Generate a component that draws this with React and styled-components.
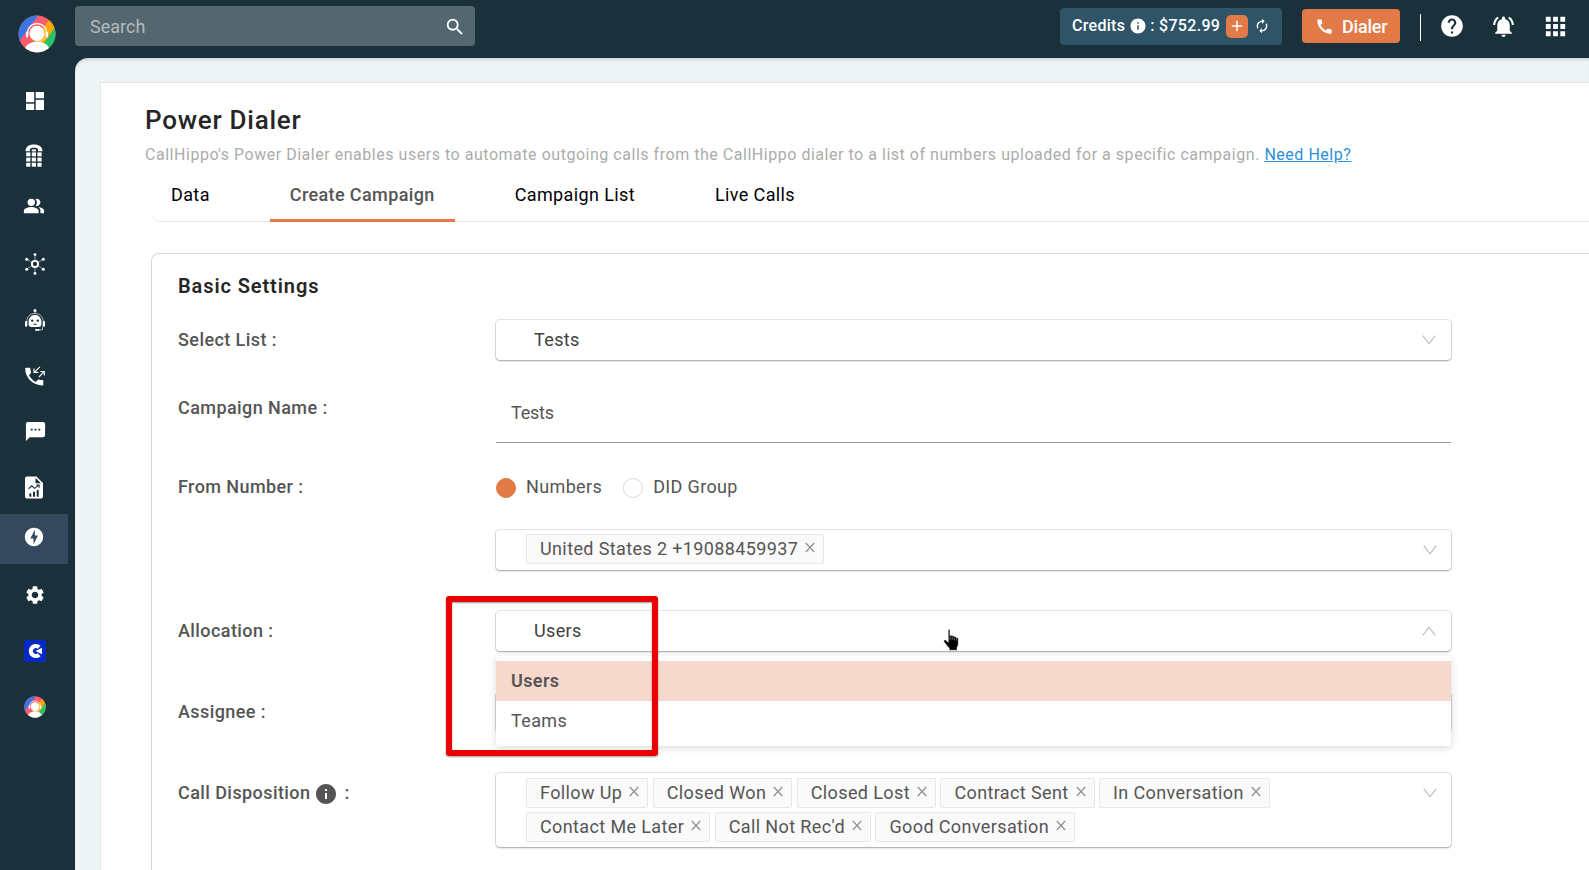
import React from 'react'
import styled, { createGlobalStyle } from 'styled-components'
import {
    MdSearch,
    MdInfo,
    MdAdd,
    MdAutorenew,
    MdCall,
    MdHelp,
    MdNotificationsActive,
    MdApps,
    MdPeopleAlt,
    MdSms,
    MdOfflineBolt,
    MdSettings,
} from 'react-icons/md'

const GlobalStyle = createGlobalStyle`
    * {
        box-sizing: border-box;
    }
    body {
        margin: 0;
        overflow: hidden;
        font-family: Roboto, "Liberation Sans", sans-serif;
        font-size: 18px;
        color: #555555;
    }
    svg {
        display: block;
        flex-shrink: 0;
    }
`

/* ---------- icons ---------- */

const DashboardIcon = () => (
    <svg width="18" height="18" viewBox="0 0 18 18" fill="#fff">
        <rect width="8.2" height="10.2" />
        <rect y="11.7" width="8.2" height="6.3" />
        <rect x="9.7" width="8.3" height="6.3" />
        <rect x="9.7" y="7.8" width="8.3" height="10.2" />
    </svg>
)

const DialPadIcon = () => (
    <svg width="18" height="23" viewBox="0 0 18 23" fill="#fff">
        <path d="M.5 7.2C.4 3 3.800.5 9 .5s8.600 2.500 8.500 6.700h-4.500V5.500C13 4.400 11.500 3.800 9 3.800s-4 .6-4 1.700v1.700z" />
        {[8.4, 13.6, 18.8].map((y) =>
            [1.2, 6.8, 12.4].map((x) => <rect key={x + '-' + y} x={x} y={y} width="4.200" height="3.900" />)
        )}
        <rect x="6.800" y="5.400" width="4.200" height="2" />
    </svg>
)

const HubIcon = () => (
    <svg width="20" height="22" viewBox="0 0 20 22" fill="#fff" stroke="#fff">
        <path
            d="M10 7V1.500M10 15v5.500M6.500 9 1.800 6.300M13.500 9l4.700-2.700M6.500 13l-4.700 3M13.500 13l4.700 3"
            strokeWidth=".7"
            opacity=".75"
        />
        <circle cx="10" cy="11" r="3.100" fill="none" strokeWidth="1.900" />
        <g stroke="none">
            <circle cx="10" cy="1.600" r="1.400" />
            <circle cx="10" cy="20.400" r="1.400" />
            <circle cx="1.700" cy="6.200" r="1.500" />
            <circle cx="18.300" cy="6.200" r="1.500" />
            <circle cx="1.700" cy="16.200" r="1.500" />
            <circle cx="18.300" cy="16.200" r="1.500" />
        </g>
    </svg>
)

const BotIcon = () => (
    <svg width="20" height="22" viewBox="0 0 20 22" fill="none">
        <circle cx="10" cy="1.500" r="1.500" fill="#fff" />
        <path d="M10 2v3M1.700 13C1.700 7.600 5.200 4.500 10 4.500s8.300 3.100 8.300 8.500M17.500 17.500v3.300h-5" stroke="#fff" strokeWidth=".8" opacity=".8" />
        <path d="M3.600 13c0-4.300 2.600-7 6.400-7s6.400 2.700 6.400 7v2.300c0 1.600-1 2.600-2.600 2.600H6.200c-1.600 0-2.600-1-2.600-2.600z" fill="#fff" />
        <rect x="0" y="12" width="2.300" height="5.800" rx="1.100" fill="#fff" />
        <rect x="17.700" y="12" width="2.300" height="5.800" rx="1.100" fill="#fff" />
        <rect x="10" y="20" width="4.600" height="1.700" rx=".8" fill="#fff" />
        <circle cx="7.200" cy="11.600" r="1.200" fill="#1a313c" />
        <circle cx="12.800" cy="11.600" r="1.200" fill="#1a313c" />
        <path d="M8 14.800h4c-.4 1.500-3.600 1.500-4 0z" fill="#1a313c" />
    </svg>
)

const CallLogIcon = () => (
    <svg width="20" height="20" viewBox="0 0 20 20">
        <path
            d="M1 1.800h3.500c.5 0 .9.4.9.900 0 1.200.2 2.400.6 3.500.1.300 0 .7-.2 1L4 9.300c1.400 2.900 3.800 5.200 6.700 6.600l2.200-2.200c.3-.2.6-.3 1-.2 1.100.4 2.300.6 3.500.6.500 0 .9.400.9.900v3.400c0 .6-.4 1-.9 1C8 19.400.200 11.600.200 2.700c0-.5.300-.9.800-.9z"
            fill="#fff"
        />
        <path d="M15 .8 9.200 6.200M9 2.600v3.800h4.200M14 11l5-5.300M15.300 5.500h4v4" fill="none" stroke="#fff" strokeWidth="1.100" />
    </svg>
)

const ReportIcon = () => (
    <svg width="18" height="23" viewBox="0 0 18 23">
        <path d="M2 .5h9.500L18 7v13.500a2 2 0 0 1-2 2H2a2 2 0 0 1-2-2v-18a2 2 0 0 1 2-2z" fill="#fff" />
        <path d="M10.500 2 16 7.300h-4.300a1.200 1.200 0 0 1-1.200-1.200z" fill="#1a313c" />
        <path d="M3.500 12.800 6.800 9.800l2.800 2.600 4-3M11.200 9h2.900v2.700" fill="none" stroke="#1a313c" strokeWidth="1.100" />
        <path d="M4.300 17.500h2v3.300h-2zM8 15.800h2v5H8zM11.700 14h2v6.800h-2z" fill="#1a313c" />
    </svg>
)

const GIcon = () => (
    <svg width="22" height="22" viewBox="0 0 22 22">
        <rect width="22" height="22" rx="2" fill="#0429c4" />
        <path d="M15.200 7.300A5 5 0 1 0 15.200 14.700" fill="none" stroke="#fff" strokeWidth="4.200" />
        <path d="M11.500 11 18 7.800v6.400z" fill="#fff" />
    </svg>
)

const AgentLogo = ({ size, id }) => (
    <svg width={size} height={size} viewBox="0 0 38 38">
        <clipPath id={id}>
            <circle cx="19" cy="19" r="18.500" />
        </clipPath>
        <g clipPath={`url(#${id})`}>
            <rect width="38" height="38" fill="#fd5c6c" />
            <path d="M0 0h20.500L1.500 26H0z" fill="#3b74e3" />
            <path d="M38 0h-3.500L14 29l9 9 15-20z" fill="#ffa90a" />
            <path d="M38 10.500 26 28l-6 10h18z" fill="#28c26e" />
            <ellipse cx="19" cy="35.500" rx="12.500" ry="9" fill="#fff" />
        </g>
        <circle cx="19" cy="18.300" r="7.600" fill="#fff" />
        <path d="M9.300 19.500C9.300 12.500 13.500 8.600 19 8.600s9.700 3.900 9.700 10.900" fill="none" stroke="#fff" strokeWidth="1.200" />
        <path d="M9.200 17.500v4M28.800 17.500v4" stroke="#fff" strokeWidth="2.200" strokeLinecap="round" />
        <path d="M28 21c-1 3.500-3.500 5.300-8 5.300" fill="none" stroke="#fbe3b0" strokeWidth="1" />
    </svg>
)

const ChevronIcon = ({ up }) => (
    <svg width="14" height="10" viewBox="0 0 14 10">
        <path d={up ? 'M.8 9.300 7 1.200l6.200 8.100' : 'M.8.700 7 8.800 13.200.7'} fill="none" stroke="#bfbfbf" strokeWidth="1.200" />
    </svg>
)

const CloseIcon = () => (
    <svg width="10" height="11" viewBox="0 0 10 11">
        <path d="M.8 1 9.200 10M9.200 1 .8 10" fill="none" stroke="#8c8c8c" strokeWidth="1.100" />
    </svg>
)

const HandIcon = () => (
    <svg width="16" height="22" viewBox="0 0 16 22">
        <path
            d="M5.300 1c0-.6 1.600-.6 1.600 0v5.500c.7-.5 1.900-.3 2.100.5.700-.4 1.900-.1 2.100.7.900-.3 2 .1 2.100 1 .9-.2 2 .2 2 1.400v5.100c0 1.400-.7 2.300-1.200 3.300v2.700H6.300v-2.100C4.500 17.500 3.300 15.500 1.700 13.700c-.9-1.100-1.200-2-.6-2.500.9-.7 2 .1 2.700.9l1.500 1.300z"
            fill="#000"
            stroke="#fff"
            strokeWidth=".4"
        />
        <path d="M7.100 7v4M9.200 7.600v3.400M11.300 8.500v2.700M13.300 9.500v2" stroke="#aaa" strokeWidth=".6" />
    </svg>
)

/* ---------- data ---------- */

// gap is the space above the item
const menu = [
    { icon: <DashboardIcon />, gap: 0, nudge: true },
    { icon: <DialPadIcon />, gap: 4 },
    { icon: <MdPeopleAlt size={22} />, gap: 1 },
    { icon: <HubIcon />, gap: 8, nudge: true },
    { icon: <BotIcon />, gap: 6, nudge: true },
    { icon: <CallLogIcon />, gap: 6, nudge: true },
    { icon: <MdSms size={23} />, gap: 5, nudge: true },
    { icon: <ReportIcon />, gap: 6 },
    { icon: <MdOfflineBolt size={22} />, gap: 2, active: true },
    { icon: <MdSettings size={22} />, gap: 6, nudge: true },
    { icon: <GIcon />, gap: 6, nudge: true },
    { icon: <AgentLogo size={22} id="agent-small" />, gap: 6, nudge: true },
]

const tabs = ['Data', 'Create Campaign', 'Campaign List', 'Live Calls']

const dispositions = [
    'Follow Up',
    'Closed Won',
    'Closed Lost',
    'Contract Sent',
    'In Conversation',
    'Contact Me Later',
    "Call Not Rec'd",
    'Good Conversation',
]

function Tag({ children }) {
    return (
        <TagBox>
            {children}
            <CloseIcon />
        </TagBox>
    )
}

function App() {
    return (
        <Page>
            <GlobalStyle />
            <Sidebar>
                <Logo>
                    <AgentLogo size={38} id="agent-large" />
                </Logo>
                {menu.map((item, i) => (
                    <MenuItem key={i} $gap={item.gap} $active={item.active} $nudge={item.nudge}>
                        {item.icon}
                    </MenuItem>
                ))}
            </Sidebar>
            <Main>
                <Header>
                    <SearchBox>
                        Search
                        <MdSearch size={22} />
                    </SearchBox>
                    <HeaderRight>
                        <Credits>
                            <span>Credits</span>
                            <MdInfo size={18} />
                            <Amount>: $752.99</Amount>
                            <AddButton>
                                <MdAdd size={18} />
                            </AddButton>
                            <MdAutorenew size={16} />
                        </Credits>
                        <DialerButton>
                            <MdCall size={19} />
                            Dialer
                        </DialerButton>
                        <Divider />
                        <HeaderIcon $left={18}>
                            <MdHelp size={26} />
                        </HeaderIcon>
                        <HeaderIcon $left={26}>
                            <MdNotificationsActive size={25} />
                        </HeaderIcon>
                        <HeaderIcon $left={25}>
                            <MdApps size={29} />
                        </HeaderIcon>
                    </HeaderRight>
                </Header>
                <Content>
                    <Card>
                        <Title>Power Dialer</Title>
                        <Description>
                            CallHippo's Power Dialer enables users to automate outgoing calls from the CallHippo dialer
                            to a list of numbers uploaded for a specific campaign. <Link>Need Help?</Link>
                        </Description>
                        <Tabs>
                            {tabs.map((tab) => (
                                <Tab key={tab} $active={tab === 'Create Campaign'}>
                                    {tab}
                                </Tab>
                            ))}
                        </Tabs>
                        <Panel>
                            <SectionTitle>Basic Settings</SectionTitle>
                            <Row $top={18}>
                                <Label>Select List :</Label>
                                <Select>
                                    <Value>Tests</Value>
                                    <Arrow>
                                        <ChevronIcon />
                                    </Arrow>
                                </Select>
                            </Row>
                            <Row $top={28}>
                                <Label>Campaign Name :</Label>
                                <Input>Tests</Input>
                            </Row>
                            <Row $top={24}>
                                <Label>From Number :</Label>
                                <div>
                                    <Radios>
                                        <Radio $checked />
                                        Numbers
                                        <Radio $second />
                                        DID Group
                                    </Radios>
                                    <Select>
                                        <Tags $top={4}>
                                            <Tag>United States 2 +19088459937</Tag>
                                        </Tags>
                                        <Arrow $multi>
                                            <ChevronIcon />
                                        </Arrow>
                                    </Select>
                                </div>
                            </Row>
                            <Row $top={41}>
                                <Label>Allocation :</Label>
                                <Select>
                                    <Value>Users</Value>
                                    <Arrow>
                                        <ChevronIcon up />
                                    </Arrow>
                                    <Dropdown>
                                        <Option $active>Users</Option>
                                        <Option>Teams</Option>
                                    </Dropdown>
                                    <Highlight />
                                    <Pointer>
                                        <HandIcon />
                                    </Pointer>
                                </Select>
                            </Row>
                            <Row $top={41}>
                                <Label>Assignee :</Label>
                                <Select />
                            </Row>
                            <Row $top={41}>
                                <Label>
                                    Call Disposition
                                    <MdInfo size={24} />:
                                </Label>
                                <Select $tall>
                                    <Tags $top={5}>
                                        {dispositions.map((name) => (
                                            <Tag key={name}>{name}</Tag>
                                        ))}
                                    </Tags>
                                    <Arrow $multi>
                                        <ChevronIcon />
                                    </Arrow>
                                </Select>
                            </Row>
                        </Panel>
                    </Card>
                </Content>
            </Main>
        </Page>
    )
}

export default App

/* ---------- layout ---------- */

const Page = styled.div`
    display: flex;
    height: 870px;
    overflow: hidden;
    background-color: #1a313c;
`

const Sidebar = styled.div`
    width: 75px;
    flex-shrink: 0;
    color: white;
`

const Logo = styled.div`
    height: 76px;
    padding: 15px 0 0 18px;
`

const MenuItem = styled.div`
    width: 68px;
    height: 50px;
    margin-top: ${({ $gap }) => $gap}px;
    padding-left: ${({ $nudge }) => ($nudge ? '2px' : '0')};
    padding-bottom: ${({ $active }) => ($active ? '4px' : '0')};
    display: flex;
    align-items: center;
    justify-content: center;
    background-color: ${({ $active }) => ($active ? '#34495e' : 'transparent')};
`

const Main = styled.div`
    flex: 1;
    min-width: 0;
    display: flex;
    flex-direction: column;
`

const Header = styled.div`
    height: 58px;
    flex-shrink: 0;
    display: flex;
    justify-content: space-between;
    color: white;
`

const SearchBox = styled.div`
    width: 400px;
    height: 40px;
    margin-top: 6px;
    padding: 0 9px 0 15px;
    display: flex;
    align-items: center;
    justify-content: space-between;
    border-radius: 4px;
    background-color: #54666f;
    color: #b5babc;

    svg {
        margin-top: 2px;
        color: white;
    }
`

const HeaderRight = styled.div`
    display: flex;
    align-items: center;
    height: 52px;
    padding-right: 19px;
`

const Credits = styled.div`
    width: 222px;
    height: 37px;
    padding-left: 12px;
    display: flex;
    align-items: center;
    border-radius: 4px;
    background-color: #2f5468;
    font-size: 16px;
    font-weight: 500;
    letter-spacing: 0.3px;

    span {
        padding-bottom: 2px;
    }
    > svg:first-of-type {
        margin-left: 4px;
    }
`

const Amount = styled.span`
    width: 76px;
    margin-left: 3px;
    white-space: pre;
`

const AddButton = styled.div`
    width: 22px;
    height: 23px;
    margin-right: 6px;
    display: flex;
    align-items: center;
    justify-content: center;
    border-radius: 5px;
    background-color: #e27a47;
`

const DialerButton = styled.div`
    width: 98px;
    height: 34px;
    margin-left: 20px;
    padding-left: 13px;
    display: flex;
    align-items: center;
    gap: 8px;
    border-radius: 4px;
    background-color: #e27a47;
    font-weight: 500;
    letter-spacing: -0.2px;
`

const Divider = styled.div`
    width: 1px;
    height: 27px;
    margin: 3px 0 0 20px;
    background-color: white;
`

const HeaderIcon = styled.div`
    margin-left: ${({ $left }) => $left}px;
`

const Content = styled.div`
    flex: 1;
    padding: 24px 0 0 25px;
    border-top-left-radius: 13px;
    background-color: #eff5f5;
    box-shadow: inset 0 3px 3px -1px rgba(0, 0, 0, 0.13);
`

const Card = styled.div`
    height: 800px;
    padding-left: 44px;
    border: 1px solid #e4e6e6;
    border-right: none;
    background-color: white;
`

const Title = styled.h1`
    margin: 0;
    padding-top: 21px;
    font-size: 26px;
    line-height: 32px;
    font-weight: 500;
    letter-spacing: 0.75px;
    color: #262626;
`

const Description = styled.p`
    margin: 0;
    padding-top: 7px;
    font-size: 16px;
    line-height: 24px;
    letter-spacing: 0.529px;
    white-space: nowrap;
    color: #acacac;
`

const Link = styled.span`
    color: #2b8fdc;
    text-decoration: underline;
`

/* ---------- tabs ---------- */

const Tabs = styled.div`
    height: 55px;
    margin-left: 6px;
    display: flex;
    border-bottom: 1px solid #e6e6e6;
    border-bottom-left-radius: 10px;
`

const Tab = styled.div`
    height: 55px;
    padding: 0 20px;
    margin-right: 40px;
    line-height: 56px;
    font-weight: ${({ $active }) => ($active ? 500 : 400)};
    letter-spacing: 0.38px;
    color: ${({ $active }) => ($active ? '#555555' : '#000000')};
    border-bottom: ${({ $active }) => ($active ? '3px solid #e27a47' : 'none')};
`

/* ---------- form ---------- */

const Panel = styled.div`
    height: 700px;
    margin: 31px 0 0 6px;
    padding-left: 26px;
    border: 1px solid #d5d5d5;
    border-right: none;
    border-top-left-radius: 8px;
`

const SectionTitle = styled.h2`
    margin: 0;
    padding-top: 17px;
    font-size: 20px;
    line-height: 31px;
    font-weight: 600;
    letter-spacing: 0.9px;
    color: #262626;
`

const Row = styled.div`
    margin-top: ${({ $top }) => $top}px;
    display: grid;
    grid-template-columns: 318px 955px;
`

const Label = styled.div`
    height: 40px;
    padding-bottom: 2px;
    display: flex;
    align-items: center;
    font-weight: 500;
    letter-spacing: 0.42px;

    svg {
        margin: 3px 6px 0 4px;
    }
`

const Select = styled.div`
    position: relative;
    height: ${({ $tall }) => ($tall ? 74 : 40)}px;
    display: flex;
    justify-content: space-between;
    border-radius: 4px;
    background-color: white;
    box-shadow: 0 0 0 1px rgba(0, 0, 0, 0.09), 0 1px 2px rgba(0, 0, 0, 0.3);
`

const Value = styled.div`
    padding-left: 38px;
    line-height: 40px;
    letter-spacing: 0.36px;
    color: #404040;
`

const Arrow = styled.div`
    height: 40px;
    display: flex;
    align-items: center;
    padding-right: ${({ $multi }) => ($multi ? 14.5 : 15.5)}px;
`

const Input = styled.div`
    height: 55px;
    padding-left: 15px;
    line-height: 50px;
    letter-spacing: -0.2px;
    border-bottom: 1px solid #999999;
`

const Radios = styled.div`
    height: 40px;
    margin-bottom: 23px;
    padding-bottom: 1px;
    display: flex;
    align-items: center;
    letter-spacing: 0.36px;
`

const Radio = styled.span`
    width: 20px;
    height: 20px;
    margin: 2px 10px 0 ${({ $second }) => ($second ? '21px' : '0')};
    border: 1px solid ${({ $checked }) => ($checked ? '#e27a47' : '#d9d9d9')};
    border-radius: 50%;
    background-color: ${({ $checked }) => ($checked ? '#e27a47' : '#ffffff')};
`

const Tags = styled.div`
    width: 800px;
    padding: ${({ $top }) => $top}px 0 0 30px;
    display: flex;
    flex-wrap: wrap;
    align-content: flex-start;
    gap: 4px 4.5px;
`

const TagBox = styled.div`
    height: 30px;
    padding: 0 8px 2px 13px;
    display: flex;
    align-items: center;
    border: 1px solid #e8e8e8;
    border-radius: 2px;
    background-color: #fafafa;
    letter-spacing: 0.38px;

    svg {
        margin: 0 0 1px 7px;
    }
`

const Dropdown = styled.div`
    position: absolute;
    top: 45px;
    left: 0;
    right: 0;
    z-index: 2;
    height: 90px;
    padding-top: 5px;
    border-radius: 4px;
    background-color: white;
    box-shadow: 0 2px 8px rgba(0, 0, 0, 0.15);
`

const Option = styled.div`
    height: 40px;
    padding-left: 15px;
    line-height: 40px;
    letter-spacing: 0.38px;
    font-weight: ${({ $active }) => ($active ? 600 : 400)};
    background-color: ${({ $active }) => ($active ? '#f6d9cc' : 'transparent')};
`

const Highlight = styled.div`
    position: absolute;
    top: -15px;
    left: -50px;
    z-index: 3;
    width: 212px;
    height: 160px;
    border: 6px solid #e80202;
    border-radius: 3px;
    box-shadow: 0 1px 2px rgba(0, 0, 0, 0.4), inset 0 1px 2px rgba(0, 0, 0, 0.4);
`

const Pointer = styled.div`
    position: absolute;
    top: 18px;
    left: 447px;
    z-index: 3;
`
